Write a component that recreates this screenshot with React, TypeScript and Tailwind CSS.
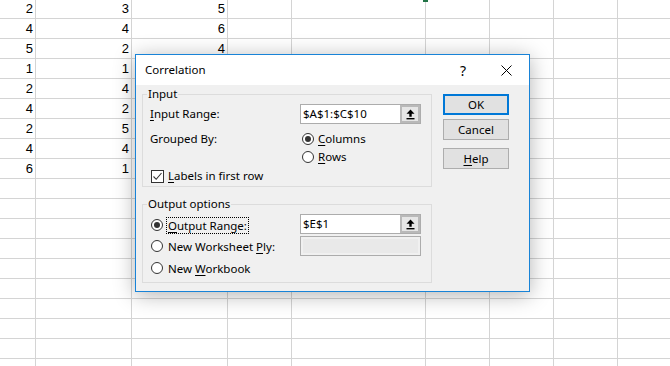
import React from "react";

const colWidths = [36, 96, 96, 64, 134, 64, 64, 64, 64];
const values: (number | null)[][] = [
  [2, 3, 5],
  [4, 4, 6],
  [5, 2, 4],
  [1, 1, null],
  [2, 4, null],
  [4, 2, null],
  [2, 5, null],
  [4, 4, null],
  [6, 1, null],
];
const ROWS = 19;

function UpArrow() {
  return (
    <svg width="9" height="11" viewBox="0 0 9 11">
      <path d="M4.5 0.5 L8.5 4.8 H5.7 V7.8 H3.3 V4.8 H0.5 Z" fill="#000" />
      <rect x="0.5" y="9" width="8" height="1.4" fill="#000" />
    </svg>
  );
}

function RangeBox({ value }: { value: string }) {
  return (
    <div className="w-[121px] h-[20px] border border-[#acacac] bg-white flex">
      <div className="flex-1 pl-[2px] leading-[18px] text-black">{value}</div>
      <div className="w-[20px] h-[18px] border-2 border-[#b9b9b9] bg-[#e6e6e6] flex items-center justify-center">
        <UpArrow />
      </div>
    </div>
  );
}

function Radio({ checked }: { checked?: boolean }) {
  return (
    <div className="w-[12px] h-[12px] rounded-full border border-[#333333] bg-white flex items-center justify-center shrink-0">
      {checked && <div className="w-[6px] h-[6px] rounded-full bg-[#333333]" />}
    </div>
  );
}

function Btn({ children, primary }: { children: React.ReactNode; primary?: boolean }) {
  return (
    <div
      className={
        primary
          ? "w-[66px] h-[21px] border-2 border-[#0078d7] bg-[#e1e1e1] flex items-center justify-center text-black"
          : "w-[66px] h-[21px] border border-[#adadad] bg-[#e1e1e1] flex items-center justify-center text-black"
      }
    >
      {children}
    </div>
  );
}

const U = ({ children }: { children: React.ReactNode }) => (
  <span className="underline underline-offset-[2px] decoration-1">{children}</span>
);

export default function App() {
  return (
    <div className="relative w-[670px] h-[366px] overflow-hidden bg-white">
      {/* Spreadsheet grid */}
      <div className="-mt-px font-['Liberation_Sans',Arial,sans-serif] text-[13px] text-black">
        {Array.from({ length: ROWS }).map((_, r) => (
          <div key={r} className="flex">
            {colWidths.map((w, c) => {
              const v = c < 3 && values[r] ? values[r][c] : null;
              return (
                <div
                  key={c}
                  style={{ width: w }}
                  className="h-[20px] shrink-0 border-r border-b border-[#d4d4d4] text-right pr-[2px] leading-[20px]"
                >
                  {v ?? ""}
                </div>
              );
            })}
          </div>
        ))}
      </div>

      {/* fill handle mark */}
      <div className="absolute left-[423px] top-0 w-[5px] h-[2px] bg-[#217346]" />

      {/* Dialog */}
      <div className="absolute left-[135px] top-[54px] w-[395px] h-[238px] border border-[#1883d7] bg-[#f0f0f0] shadow-[0_3px_20px_rgba(0,0,0,0.3)] flex flex-col font-['Noto_Sans','Open_Sans',sans-serif] text-[11.5px] text-black overflow-hidden">
        {/* Title bar */}
        <div className="h-[30px] bg-white flex items-center shrink-0">
          <span className="pl-[9px] text-[11.5px]">Correlation</span>
          <div className="ml-auto flex">
            <div className="w-[36px] h-[30px] flex items-center justify-center text-[14px] pr-[4px]">?</div>
            <div className="w-[46px] h-[30px] flex items-center justify-center">
              <svg width="11" height="11" viewBox="0 0 11 11">
                <path d="M0.5 0.5 L10.5 10.5 M10.5 0.5 L0.5 10.5" stroke="#000" strokeWidth="1" />
              </svg>
            </div>
          </div>
        </div>

        {/* Body */}
        <div className="flex pl-[6px] pt-[2px]">
          <div className="w-[290px] flex flex-col">
            {/* Input group */}
            <fieldset className="border border-[#dcdcdc] pb-[2px]">
              <legend className="ml-[4px] px-[1px] leading-[14px]">Input</legend>
              <div className="flex items-center mt-[3px] h-[20px]">
                <div className="w-[157px] pl-[7px]">
                  <U>I</U>nput Range:
                </div>
                <RangeBox value="$A$1:$C$10" />
              </div>
              <div className="flex items-center mt-[6px] h-[18px]">
                <div className="w-[157px] pl-[7px]">Grouped By:</div>
                <div className="ml-[2px] flex items-center">
                  <Radio checked />
                  <span className="ml-[4px]">
                    <U>C</U>olumns
                  </span>
                </div>
              </div>
              <div className="flex items-center h-[18px]">
                <div className="w-[157px]" />
                <div className="ml-[2px] flex items-center">
                  <Radio />
                  <span className="ml-[4px]">
                    <U>R</U>ows
                  </span>
                </div>
              </div>
              <div className="flex items-center mt-[2px] h-[16px] pl-[8px]">
                <div className="w-[13px] h-[13px] border border-[#333333] bg-white flex items-center justify-center shrink-0">
                  <svg width="11" height="11" viewBox="0 0 11 11">
                    <path d="M1.5 5.5 L4.2 8.3 L9.5 2" stroke="#333" strokeWidth="1.1" fill="none" />
                  </svg>
                </div>
                <span className="ml-[4px]">
                  <U>L</U>abels in first row
                </span>
              </div>
            </fieldset>

            {/* Output group */}
            <fieldset className="border border-[#dcdcdc] mt-[10px] pb-[5px]">
              <legend className="ml-[4px] px-[1px] leading-[14px]">Output options</legend>
              <div className="flex items-center mt-[3px] h-[20px]">
                <div className="w-[157px] pl-[8px] flex items-center mt-[2px]">
                  <Radio checked />
                  <span className="ml-[3px] border border-dotted border-black px-[1px] leading-[15px]">
                    <U>O</U>utput Range:
                  </span>
                </div>
                <RangeBox value="$E$1" />
              </div>
              <div className="flex items-center mt-[2px] h-[20px]">
                <div className="w-[157px] pl-[8px] flex items-center">
                  <Radio />
                  <span className="ml-[3px] border border-transparent px-[1px] leading-[15px]">
                    New Worksheet <U>P</U>ly:
                  </span>
                </div>
                <div className="w-[121px] h-[20px] border border-[#acacac] bg-[#f0f0f0] p-[2px]">
                  <div className="w-full h-full bg-[#e9e9e9]" />
                </div>
              </div>
              <div className="flex items-center mt-[3px] h-[18px]">
                <div className="w-[157px] pl-[8px] flex items-center">
                  <Radio />
                  <span className="ml-[3px] border border-transparent px-[1px] leading-[15px]">
                    New <U>W</U>orkbook
                  </span>
                </div>
              </div>
            </fieldset>
          </div>

          {/* Buttons */}
          <div className="ml-[11px] pt-[7px] flex flex-col">
            <Btn primary>OK</Btn>
            <div className="mt-[4px]">
              <Btn>Cancel</Btn>
            </div>
            <div className="mt-[8px]">
              <Btn>
                <U>H</U>elp
              </Btn>
            </div>
          </div>
        </div>
      </div>
    </div>
  );
}
